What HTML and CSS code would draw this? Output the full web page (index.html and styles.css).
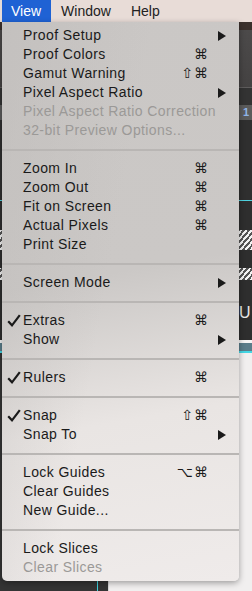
FILE: index.html
```html
<!DOCTYPE html>
<html lang="en">
<head>
    <meta charset="UTF-8">
    <title>View menu</title>
    <link rel="stylesheet" href="styles.css">
</head>
<body>
    <div class="menubar">
        <span class="menubar-item active">View</span>
        <span class="menubar-item">Window</span>
        <span class="menubar-item">Help</span>
    </div>

    <div class="workspace">
        <div class="band band-brown"></div>
        <div class="band band-panel"></div>
        <div class="band band-dark"></div>
        <div class="band band-ruler">1</div>
        <div class="band band-canvas"></div>
        <div class="band band-cyan"></div>
        <div class="band band-canvas-2"></div>
        <div class="band band-hatch"></div>
        <div class="band band-canvas-3"></div>
        <div class="band band-hatch-2"></div>
        <div class="band band-canvas-4"></div>
        <div class="band band-letters">U</div>
        <div class="band band-canvas-5"></div>
        <div class="band band-white"></div>
        <div class="band band-blue"></div>
        <div class="band band-cyan-2"></div>
        <div class="band band-page"></div>

        <div class="menu" id="viewMenu"></div>
    </div>

    <script>
        // null = separator; s = shortcut, sub = has submenu, off = disabled, on = checked
        const items = [
            { t: "Proof Setup", sub: true },
            { t: "Proof Colors", s: "⌘" },
            { t: "Gamut Warning", s: "⇧⌘" },
            { t: "Pixel Aspect Ratio", sub: true },
            { t: "Pixel Aspect Ratio Correction", off: true },
            { t: "32-bit Preview Options...", off: true },
            null,
            { t: "Zoom In", s: "⌘" },
            { t: "Zoom Out", s: "⌘" },
            { t: "Fit on Screen", s: "⌘" },
            { t: "Actual Pixels", s: "⌘" },
            { t: "Print Size" },
            null,
            { t: "Screen Mode", sub: true },
            null,
            { t: "Extras", s: "⌘", on: true },
            { t: "Show", sub: true },
            null,
            { t: "Rulers", s: "⌘", on: true },
            null,
            { t: "Snap", s: "⇧⌘", on: true },
            { t: "Snap To", sub: true },
            null,
            { t: "Lock Guides", s: "⌥⌘" },
            { t: "Clear Guides" },
            { t: "New Guide..." },
            null,
            { t: "Lock Slices" },
            { t: "Clear Slices", off: true }
        ];

        const menu = document.getElementById('viewMenu');
        const arrow = '<svg width="8" height="10" viewBox="0 0 8 10"><polygon points="0,0 8,5 0,10" fill="#1a1a1a"/></svg>';
        const check = '<svg width="14" height="13" viewBox="0 0 14 13"><path d="M1.2 7.2 L5 11.3 L12.8 1.2" fill="none" stroke="#1a1a1a" stroke-width="2.2"/></svg>';

        items.forEach(item => {
            const row = document.createElement('div');
            if (!item) {
                row.className = 'separator';
            } else {
                row.className = 'menu-item' + (item.off ? ' disabled' : '');
                row.innerHTML = `
                    <span class="check">${item.on ? check : ''}</span>
                    <span class="label">${item.t}</span>
                    <span class="shortcut">${item.s || ''}</span>
                    <span></span>
                    <span class="arrow">${item.sub ? arrow : ''}</span>
                `;
            }
            menu.appendChild(row);
        });
    </script>
</body>
</html>
```

FILE: styles.css
```css
* {
    box-sizing: border-box;
    margin: 0;
    padding: 0;
}

body {
    font-family: "Liberation Sans", Arial, sans-serif;
    font-size: 14px;
    color: #1a1a1a;
    background-color: #efeded;
    overflow: hidden;
}

.menubar {
    display: flex;
    height: 22px;
    padding-left: 2px;
    background-color: #e8dcd7;
    line-height: 22px;
}

.menubar-item {
    padding: 0 10px 0 10px;
    color: #222;
}

.menubar-item.active {
    padding-left: 9px;
    background-color: #1f62d4;
    color: white;
}

.workspace {
    position: relative;
    height: 569px;
}

.band {
    width: 100%;
}

.band-brown { height: 8px; background-color: #3b302c; }
.band-panel {
    height: 58px;
    background: linear-gradient(#4c4a4a, #444242);
    border-bottom: 1px solid #5e5c5c;
}
.band-dark { height: 17px; background-color: #333; }
.band-ruler {
    height: 15px;
    background-color: #5b5b5b;
    color: #8fb4e8;
    font-size: 11px;
    font-weight: bold;
    line-height: 15px;
    padding-left: 243px;
}
.band-canvas { height: 80px; background-color: #2f2f2f; }
.band-cyan { height: 1px; background-color: #4fd3e0; }
.band-canvas-2 { height: 29px; background-color: #2e2e2e; }
.band-hatch {
    height: 20px;
    background: repeating-linear-gradient(-50deg, #f2f2f2 0 2px, #555 2px 4px);
}
.band-canvas-3 { height: 18px; background-color: #2e2e2e; }
.band-hatch-2 {
    height: 12px;
    background: repeating-linear-gradient(-50deg, #f2f2f2 0 2px, #555 2px 4px);
}
.band-canvas-4 { height: 20px; background-color: #2e2e2e; }
.band-letters {
    height: 26px;
    background-color: #2e2e2e;
    color: #e8e8e8;
    font-size: 16px;
    line-height: 26px;
    padding-left: 239px;
}
.band-canvas-5 { height: 14px; background-color: #2e2e2e; }
.band-white { height: 3px; background-color: #f4f4f4; }
.band-blue { height: 8px; background-color: #5a7d8a; }
.band-cyan-2 { height: 2px; background-color: #44d6e4; }
.band-page {
    height: 238px;
    background: linear-gradient(to right, #343434 0 97px, #3fd0dc 97px 98px, #343434 98px 108px, #d8d8d8 108px 109px, #f1efef 109px);
}

.menu {
    position: absolute;
    top: 0;
    left: 2px;
    width: 237px;
    padding: 4px 0;
    border-radius: 0 0 5px 5px;
    background:
        linear-gradient(100deg, rgba(190, 187, 185, 0.55) 0%, rgba(190, 187, 185, 0) 45%),
        linear-gradient(170deg, #cac7c5 0%, #cbc8c6 45%, #e9e5e3 70%, #efebea 100%);
    box-shadow: 0 2px 6px rgba(0, 0, 0, 0.35);
}

.menu-item {
    display: grid;
    grid-template-columns: 21px 1fr auto 9px 8px;
    align-items: center;
    height: 19px;
    padding-right: 13px;
    line-height: 19px;
    white-space: nowrap;
}

.label {
    letter-spacing: 0.4px;
}

.menu-item.disabled {
    color: #9b9997;
}

.check {
    display: flex;
    align-items: center;
    padding-left: 5px;
}

.shortcut {
    font-family: "DejaVu Sans", sans-serif;
    font-size: 14px;
    letter-spacing: 1px;
}

.arrow {
    display: flex;
    align-items: center;
}

.separator {
    height: 19px;
    display: flex;
    flex-direction: column;
    justify-content: center;
}

.separator::before {
    content: "";
    height: 2px;
    background-color: #b9b6b4;
}
```
